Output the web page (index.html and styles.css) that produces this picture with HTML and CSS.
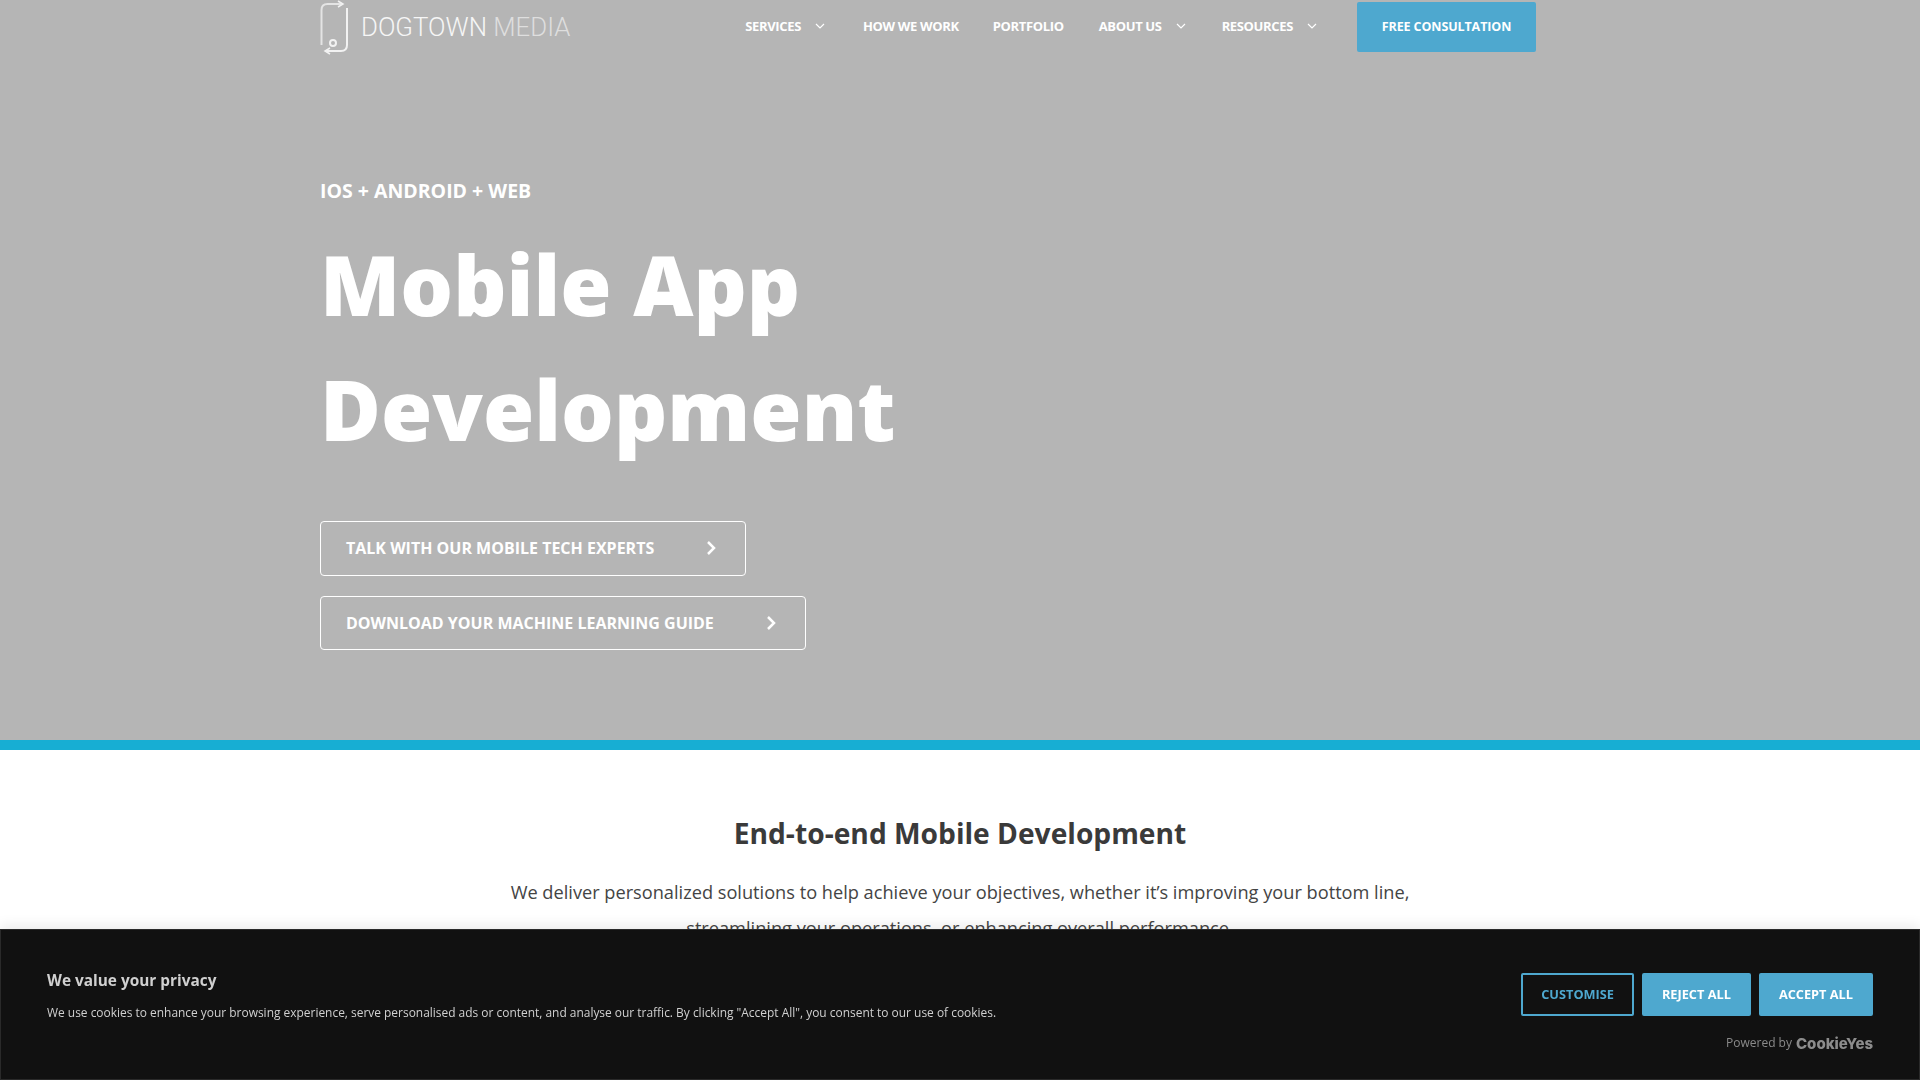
FILE: index.html
```html
<!DOCTYPE html>
<html lang="en">
<head>
    <meta charset="UTF-8">
    <meta name="viewport" content="width=device-width, initial-scale=1.0">
    <title>Mobile App Development | Dogtown Media</title>
    <link rel="stylesheet" href="styles.css">
</head>
<body>
    <section class="hero">
        <header class="site-header">
            <a class="logo" href="#">
                <svg class="logo-icon" width="28" height="56" viewBox="0 0 28 56" fill="none" stroke="#f2f2f2" stroke-width="2">
                    <path d="M1.500 45V10Q1.500 4 7.500 4H22" stroke="#e4e4e4"/>
                    <path d="M18 1L23 4L18 7" stroke-width="1.500"/>
                    <path d="M27 8V45Q27 51 21 51H6"/>
                    <path d="M10 48L5 51L10 54" stroke-width="1.500"/>
                    <circle cx="13" cy="43" r="3"/>
                </svg>
                <span class="logo-text">DOGTOWN <span class="logo-light">MEDIA</span></span>
            </a>
            <nav class="main-nav">
                <a class="nav-link nav-link-services" href="#">SERVICES <svg class="caret" width="10" height="6" viewBox="0 0 10 6"><path d="M1 1L5 5L9 1"/></svg></a>
                <a class="nav-link nav-link-how" href="#">HOW WE WORK</a>
                <a class="nav-link nav-link-portfolio" href="#">PORTFOLIO</a>
                <a class="nav-link" href="#">ABOUT US <svg class="caret" width="10" height="6" viewBox="0 0 10 6"><path d="M1 1L5 5L9 1"/></svg></a>
                <a class="nav-link nav-link-resources" href="#">RESOURCES <svg class="caret" width="10" height="6" viewBox="0 0 10 6"><path d="M1 1L5 5L9 1"/></svg></a>
                <a class="nav-cta" href="#">FREE CONSULTATION</a>
            </nav>
        </header>

        <div class="hero-content">
            <p class="eyebrow">IOS + ANDROID + WEB</p>
            <h1>Mobile App<br>Development</h1>
            <div class="hero-buttons">
                <a class="outline-btn" href="#">TALK WITH OUR MOBILE TECH EXPERTS <svg class="chevron" width="10" height="16" viewBox="0 0 10 16"><path d="M2 2L8 8L2 14"/></svg></a>
                <a class="outline-btn" href="#">DOWNLOAD YOUR MACHINE LEARNING GUIDE <svg class="chevron" width="10" height="16" viewBox="0 0 10 16"><path d="M2 2L8 8L2 14"/></svg></a>
            </div>
        </div>
    </section>

    <section class="intro">
        <h2>End-to-end Mobile Development</h2>
        <p>We deliver personalized solutions to help achieve your objectives, whether it’s improving your bottom line, streamlining your operations, or enhancing overall performance.</p>
    </section>

    <!-- Cookie banner -->
    <div class="cookie-bar">
        <div class="cookie-text">
            <h3>We value your privacy</h3>
            <p>We use cookies to enhance your browsing experience, serve personalised ads or content, and analyse our traffic. By clicking "Accept All", you consent to our use of cookies.</p>
        </div>
        <div class="cookie-side">
            <div class="cookie-buttons">
                <button class="cookie-btn cookie-btn-outline">CUSTOMISE</button>
                <button class="cookie-btn">REJECT ALL</button>
                <button class="cookie-btn">ACCEPT ALL</button>
            </div>
            <div class="powered">Powered by <span class="powered-brand">CookieYes</span></div>
        </div>
    </div>
</body>
</html>
```

FILE: styles.css
```css
html, body {
    height: 100%;
}

body {
    font-family: "Open Sans", Arial, sans-serif;
    margin: 0;
    padding: 0;
    color: #333;
    background-color: #fff;
    overflow: hidden;
}

a {
    color: inherit;
    text-decoration: none;
}

.hero {
    height: 740px;
    background-color: #b5b5b5;
    border-bottom: 10px solid #17aed3;
    color: #fff;
}

.site-header {
    width: 1216px;
    margin-left: 320px;
    height: 56px;
    display: flex;
    justify-content: space-between;
    align-items: flex-start;
}

.logo {
    display: flex;
    align-items: center;
    gap: 13px;
    height: 56px;
}

.logo-icon {
    display: block;
}

.logo-text {
    font-family: Roboto, sans-serif;
    font-weight: 300;
    font-size: 25.800px;
    color: #f6f6f6;
    padding-bottom: 2px;
}

.logo-light {
    color: #dedede;
}

.main-nav {
    display: flex;
    align-items: center;
    height: 50px;
    margin-top: 2px;
}

.nav-link {
    font-size: 13px;
    font-weight: 700;
    letter-spacing: -0.35px;
    margin-right: 36px;
    padding-bottom: 2px;
    display: flex;
    align-items: center;
    gap: 14px;
}

.nav-link-services {
    margin-right: 38px;
}

.nav-link-how {
    margin-right: 34px;
}

.nav-link-portfolio {
    margin-right: 35px;
}

.nav-link-resources {
    margin-right: 40px;
}

.caret {
    fill: none;
    stroke: #fff;
    stroke-width: 1.200;
}

.nav-cta {
    width: 179px;
    height: 50px;
    box-sizing: border-box;
    padding-bottom: 2px;
    display: flex;
    align-items: center;
    justify-content: center;
    background-color: #4ea8cf;
    border-radius: 2px;
    font-size: 12.500px;
    font-weight: 700;
    letter-spacing: -0.1px;
}

.hero-content {
    width: 1216px;
    margin-left: 320px;
}

.eyebrow {
    margin: 121px 0 0;
    font-size: 19.500px;
    font-weight: 700;
    line-height: 27px;
}

h1 {
    margin: 17px 0 0;
    font-size: 83px;
    font-weight: 800;
    line-height: 125px;
}

.hero-buttons {
    margin-top: 50px;
    display: flex;
    flex-direction: column;
    align-items: flex-start;
    gap: 20px;
}

.outline-btn {
    height: 52.500px;
    display: flex;
    align-items: center;
    gap: 52px;
    padding: 0 29px 0 25px;
    border: 1px solid #fff;
    border-radius: 4px;
    font-size: 16px;
    font-weight: 700;
}

.chevron {
    fill: none;
    stroke: #fff;
    stroke-width: 2.500;
}

.intro {
    width: 920px;
    margin: 0 auto;
    text-align: center;
}

.intro h2 {
    margin: 64px 0 0;
    font-size: 28.200px;
    font-weight: 700;
    line-height: 38px;
    color: #3a3a3a;
}

.intro p {
    margin: 22px 0 0;
    font-size: 18.200px;
    line-height: 36px;
    color: #444;
}

.cookie-bar {
    position: fixed;
    left: 0;
    right: 0;
    bottom: 0;
    height: 151px;
    box-sizing: border-box;
    padding: 0 46px;
    background-color: #111;
    border: 1px solid #2a2a2a;
    box-shadow: 0 -4px 12px rgba(0, 0, 0, 0.08);
    display: flex;
    justify-content: space-between;
    color: #d0d0d0;
}

.cookie-text h3 {
    margin: 40px 0 0;
    font-size: 15.400px;
    font-weight: 700;
    line-height: 22px;
}

.cookie-text p {
    margin: 10px 0 0;
    font-size: 11.950px;
    line-height: 22px;
}

.cookie-side {
    display: flex;
    flex-direction: column;
    align-items: flex-end;
}

.cookie-buttons {
    margin-top: 43px;
    display: flex;
    gap: 8px;
}

.cookie-btn {
    height: 43px;
    padding: 0 18px 2px;
    font-family: inherit;
    font-size: 12.750px;
    font-weight: 700;
    color: #fff;
    background-color: #4ea8cf;
    border: 2px solid #4ea8cf;
    border-radius: 2px;
}

.cookie-btn-outline {
    color: #4ea8cf;
    background-color: transparent;
}

.powered {
    margin-top: 18px;
    font-size: 12px;
    color: #8a8a8a;
    display: flex;
    align-items: flex-start;
    gap: 4px;
}

.powered-brand {
    font-family: Inter, sans-serif;
    font-size: 15px;
    font-weight: 800;
    color: #8c8c8c;
}
```
